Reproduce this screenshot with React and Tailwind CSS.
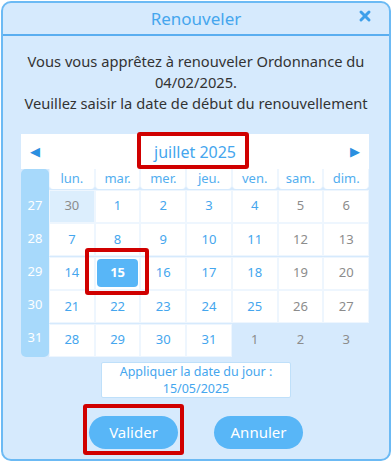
import React from 'react';

// --- Calendar data (juillet 2025) ---
const WEEKDAYS = ['lun.', 'mar.', 'mer.', 'jeu.', 'ven.', 'sam.', 'dim.'];

const WEEKS = [
  { num: 27, days: [[30, 'prev'], [1], [2], [3], [4], [5, 'we'], [6, 'we']] },
  { num: 28, days: [[7], [8], [9], [10], [11], [12, 'we'], [13, 'we']] },
  { num: 29, days: [[14], [15, 'sel'], [16], [17], [18], [19, 'we'], [20, 'we']] },
  { num: 30, days: [[21], [22], [23], [24], [25], [26, 'we'], [27, 'we']] },
  { num: 31, days: [[28], [29], [30], [31], [1, 'next'], [2, 'next'], [3, 'next']] },
];

const DayCell = ({ value, kind }) => {
  if (kind === 'next') {
    return (
      <div className="h-[33px] flex items-center justify-center text-[13px] text-[#8c8c8c]">
        {value}
      </div>
    );
  }

  if (kind === 'sel') {
    return (
      <div className="relative h-[33px] bg-white border border-[#eef6fe]">
        <div className="absolute inset-x-[1px] top-[1px] bottom-[2px] rounded-[4px] bg-[#58b6f7] flex items-center justify-center text-[13px] font-bold text-white">
          {value}
        </div>
        {/* annotation frame */}
        <div className="absolute -left-[11px] -right-[10px] -top-[10px] -bottom-[6px] border-4 border-[#d00000] rounded-[3px]" />
      </div>
    );
  }

  const bg = kind === 'prev' ? 'bg-[#dceefd]' : 'bg-white';
  const color = kind === 'prev' || kind === 'we' ? 'text-[#8c8c8c]' : 'text-[#45a6ee]';

  return (
    <div className={`h-[33px] ${bg} border border-[#eef6fe] flex items-center justify-center text-[13px] ${color}`}>
      {value}
    </div>
  );
};

export default function App() {
  return (
    <div className="w-[392px] h-[462px] bg-white pt-[1px] pl-[1px]" style={{ fontFamily: '"Noto Sans", "Open Sans", sans-serif' }}>
      <div className="w-[390px] h-[460px] rounded-[10px] border-2 border-[#6cbaf4] bg-[#d6eafd] flex flex-col">
        {/* Header */}
        <div className="relative h-[33px] flex items-center justify-center border-b-2 border-[#5aaef0]">
          <span className="text-[17px] text-[#45a6ee]">Renouveler</span>
          <button className="absolute right-[17px] top-[6px] text-[#3d9fea]" aria-label="Fermer">
            <svg width="14" height="14" viewBox="0 0 14 14" stroke="currentColor" strokeWidth="3" strokeLinecap="round">
              <line x1="3" y1="3" x2="11" y2="11" />
              <line x1="11" y1="3" x2="3" y2="11" />
            </svg>
          </button>
        </div>

        {/* Message */}
        <div className="pt-[15px] text-center text-[14.7px] leading-[21px] text-[#333]">
          <p>Vous vous apprêtez à renouveler Ordonnance du</p>
          <p>04/02/2025.</p>
          <p>Veuillez saisir la date de début du renouvellement</p>
        </div>

        {/* Calendar */}
        <div className="mt-[20px] ml-[18px] w-[348px]">
          <div className="h-[35px] bg-white flex items-center justify-between px-[9px]">
            <span className="text-[13px] text-[#2a8fe0]">◀</span>
            <span className="relative text-[16px] text-[#45a6ee]">
              juillet 2025
              <span className="absolute -left-[17px] -right-[13px] -top-[8px] -bottom-[5px] border-4 border-[#d00000] rounded-[3px]" />
            </span>
            <span className="text-[13px] text-[#2a8fe0]">▶</span>
          </div>

          <div className="flex">
            <div className="w-[28px] bg-[#a7d9fb] rounded-[5px] pt-[20px] pb-[3px]">
              {WEEKS.map((w) => (
                <div key={w.num} className="h-[33px] flex items-center justify-center text-[13px] text-white">
                  {w.num}
                </div>
              ))}
            </div>

            <div className="w-[320px] grid grid-cols-7">
              {WEEKDAYS.map((d) => (
                <div key={d} className="h-[20px] bg-white rounded-b-[4px] border-x border-[#eef6fe] flex items-center justify-center text-[13px] text-[#52aeef]">
                  {d}
                </div>
              ))}
              {WEEKS.map((w) =>
                w.days.map(([value, kind], i) => <DayCell key={`${w.num}-${i}`} value={value} kind={kind} />)
              )}
            </div>
          </div>
        </div>

        {/* Today */}
        <div className="mt-[5px] mx-auto w-[190px] h-[36px] bg-white border border-[#bfe0fa] rounded-[2px] flex flex-col items-center justify-center text-[12.5px] leading-[17px] text-[#45a6ee]">
          <span>Appliquer la date du jour :</span>
          <span>15/05/2025</span>
        </div>

        {/* Actions */}
        <div className="mt-[18px] flex justify-center gap-[36px]">
          <div className="relative">
            <button className="w-[89px] h-[33px] rounded-full bg-[#58b6f7] text-[15px] text-white">Valider</button>
            <span className="absolute -left-[6px] -right-[6px] -top-[12px] -bottom-[6px] border-4 border-[#d00000] rounded-[3px]" />
          </div>
          <button className="w-[89px] h-[33px] rounded-full bg-[#58b6f7] text-[15px] text-white">Annuler</button>
        </div>
      </div>
    </div>
  );
}
